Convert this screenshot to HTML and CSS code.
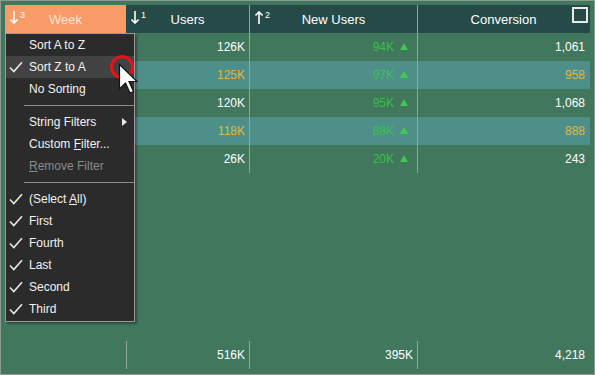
FILE: index.html
```html
<!DOCTYPE html>
<html lang="en">
<head>
    <meta charset="UTF-8">
    <title>Grid Filter Menu</title>
    <link rel="stylesheet" href="styles.css">
</head>
<body>
    <div class="window">
        <div class="grid">
            <div class="row head">
                <div class="cell col-week sorted">
                    <span class="sort"><svg width="8" height="13" viewBox="0 0 8 13"><path d="M4 0V12M0.5 8.5L4 12L7.5 8.5" fill="none" stroke="currentColor" stroke-width="1.6"/></svg><sup>3</sup></span>
                    Week
                </div>
                <div class="cell col-users">
                    <span class="sort"><svg width="8" height="13" viewBox="0 0 8 13"><path d="M4 0V12M0.5 8.5L4 12L7.5 8.5" fill="none" stroke="currentColor" stroke-width="1.6"/></svg><sup>1</sup></span>
                    Users
                </div>
                <div class="cell col-new">
                    <span class="sort"><svg width="8" height="13" viewBox="0 0 8 13"><path d="M4 13V1M0.5 4.5L4 1L7.5 4.5" fill="none" stroke="currentColor" stroke-width="1.6"/></svg><sup>2</sup></span>
                    New Users
                </div>
                <div class="cell col-conv">
                    Conversion
                    <span class="check-box"></span>
                </div>
            </div>

            <!-- week names sit under the open filter menu -->
            <div class="row">
                <div class="cell col-week"></div>
                <div class="cell col-users num">126K</div>
                <div class="cell col-new num up">94K <i class="tri"></i></div>
                <div class="cell col-conv num">1,061</div>
            </div>
            <div class="row alt">
                <div class="cell col-week"></div>
                <div class="cell col-users num">125K</div>
                <div class="cell col-new num up">97K <i class="tri"></i></div>
                <div class="cell col-conv num">958</div>
            </div>
            <div class="row">
                <div class="cell col-week"></div>
                <div class="cell col-users num">120K</div>
                <div class="cell col-new num up">95K <i class="tri"></i></div>
                <div class="cell col-conv num">1,068</div>
            </div>
            <div class="row alt">
                <div class="cell col-week"></div>
                <div class="cell col-users num">118K</div>
                <div class="cell col-new num up">88K <i class="tri"></i></div>
                <div class="cell col-conv num">888</div>
            </div>
            <div class="row">
                <div class="cell col-week"></div>
                <div class="cell col-users num">26K</div>
                <div class="cell col-new num up">20K <i class="tri"></i></div>
                <div class="cell col-conv num">243</div>
            </div>

            <div class="spacer"></div>

            <div class="row foot">
                <div class="cell col-week"></div>
                <div class="cell col-users num">516K</div>
                <div class="cell col-new num">395K</div>
                <div class="cell col-conv num">4,218</div>
            </div>
        </div>

        <div class="menu">
            <div class="item">Sort A to Z</div>
            <div class="item active"><svg class="tick" width="14" height="12" viewBox="0 0 14 12"><path d="M1 6.5L4.8 10.5L13 1.2" fill="none" stroke="#e8e8e8" stroke-width="1.6"/></svg>Sort Z to A</div>
            <div class="item">No Sorting</div>
            <div class="sep"></div>
            <div class="item sub">String Filters</div>
            <div class="item">Custom <u>F</u>ilter...</div>
            <div class="item disabled"><u>R</u>emove Filter</div>
            <div class="sep"></div>
            <div class="item"><svg class="tick" width="14" height="12" viewBox="0 0 14 12"><path d="M1 6.5L4.8 10.5L13 1.2" fill="none" stroke="#e8e8e8" stroke-width="1.6"/></svg>(Select <u>A</u>ll)</div>
            <div class="item"><svg class="tick" width="14" height="12" viewBox="0 0 14 12"><path d="M1 6.5L4.8 10.5L13 1.2" fill="none" stroke="#e8e8e8" stroke-width="1.6"/></svg>First</div>
            <div class="item"><svg class="tick" width="14" height="12" viewBox="0 0 14 12"><path d="M1 6.5L4.8 10.5L13 1.2" fill="none" stroke="#e8e8e8" stroke-width="1.6"/></svg>Fourth</div>
            <div class="item"><svg class="tick" width="14" height="12" viewBox="0 0 14 12"><path d="M1 6.5L4.8 10.5L13 1.2" fill="none" stroke="#e8e8e8" stroke-width="1.6"/></svg>Last</div>
            <div class="item"><svg class="tick" width="14" height="12" viewBox="0 0 14 12"><path d="M1 6.5L4.8 10.5L13 1.2" fill="none" stroke="#e8e8e8" stroke-width="1.6"/></svg>Second</div>
            <div class="item"><svg class="tick" width="14" height="12" viewBox="0 0 14 12"><path d="M1 6.5L4.8 10.5L13 1.2" fill="none" stroke="#e8e8e8" stroke-width="1.6"/></svg>Third</div>
        </div>

        <div class="click-ring"></div>
        <svg class="cursor" width="20" height="32" viewBox="0 0 20 32">
            <path d="M1.5 1.5V26L7.5 20L12 30L15.5 28.5L11 18.5H19Z" fill="#fff" stroke="#111" stroke-width="1.2"/>
        </svg>
    </div>
</body>
</html>
```

FILE: styles.css
```css
* {
    box-sizing: border-box;
}
body {
    margin: 0;
    font-family: "Liberation Sans", Arial, sans-serif;
    font-size: 12px;
    color: #fff;
}
.window {
    position: relative;
    width: 595px;
    height: 375px;
    background: #41775c;
    border: 1px solid #8a9d93;
    padding: 4px 4px 5px 4px;
}
.grid {
    display: flex;
    flex-direction: column;
    height: 100%;
}
.row {
    display: grid;
    grid-template-columns: 121px 123px 168px 172px;
    height: 28px;
}
.row.alt {
    background: #4f8f8a;
    color: #e6b441;
}
.row.alt .up {
    color: #3dc24c;
}
.cell {
    display: flex;
    align-items: center;
    padding: 0 4px;
    white-space: nowrap;
}
.cell + .cell {
    border-left: 1px solid #8fa69c;
}
.num {
    justify-content: flex-end;
}
.up {
    color: #37c048;
}
.tri {
    display: inline-block;
    width: 0;
    height: 0;
    border-left: 4px solid transparent;
    border-right: 4px solid transparent;
    border-bottom: 7px solid #3ccb4c;
    margin: 0 5px 2px 6px;
}

.head {
    background: #254a48;
}
.head .cell {
    position: relative;
    justify-content: center;
    font-size: 13px;
}
.head .sorted {
    background: #f99b68;
    color: #f8e4d8;
}
.head .col-users {
    border-left: none;
}
.sort {
    position: absolute;
    left: 5px;
    top: 6px;
    display: flex;
    align-items: flex-start;
    color: #fff;
}
.sort sup {
    font-size: 9px;
    margin-left: 2px;
    line-height: 9px;
}
.check-box {
    position: absolute;
    right: 1px;
    top: 2px;
    width: 16px;
    height: 16px;
    border: 2px solid #e6ecea;
}

.spacer {
    flex: 1;
}
.foot .col-users {
    border-left: 1px solid #8fa69c;
}

.menu {
    position: absolute;
    left: 4px;
    top: 32px;
    width: 130px;
    height: 289px;
    background: #2b2b2b;
    border: 1px solid #9a9a9a;
    box-shadow: 2px 2px 2px rgba(0, 0, 0, 0.35);
}
.item {
    position: relative;
    height: 22px;
    line-height: 22px;
    padding-left: 23px;
    color: #f2f2f2;
}
.item.active {
    background: #424242;
}
.item.disabled {
    color: #8a8a8a;
}
.tick {
    position: absolute;
    left: 3px;
    top: 5px;
}
.item.sub::after {
    content: "";
    position: absolute;
    right: 7px;
    top: 7px;
    border-top: 4px solid transparent;
    border-bottom: 4px solid transparent;
    border-left: 5px solid #e8e8e8;
}
.sep {
    height: 11px;
    margin-left: 18px;
    position: relative;
}
.sep::after {
    content: "";
    position: absolute;
    left: 0;
    right: 0;
    top: 5px;
    border-top: 1px solid #8a8a8a;
}

.click-ring {
    position: absolute;
    left: 109px;
    top: 54px;
    width: 24px;
    height: 24px;
    border: 3px solid #e8121b;
    border-radius: 50%;
}
.cursor {
    position: absolute;
    left: 117px;
    top: 62px;
}
```
